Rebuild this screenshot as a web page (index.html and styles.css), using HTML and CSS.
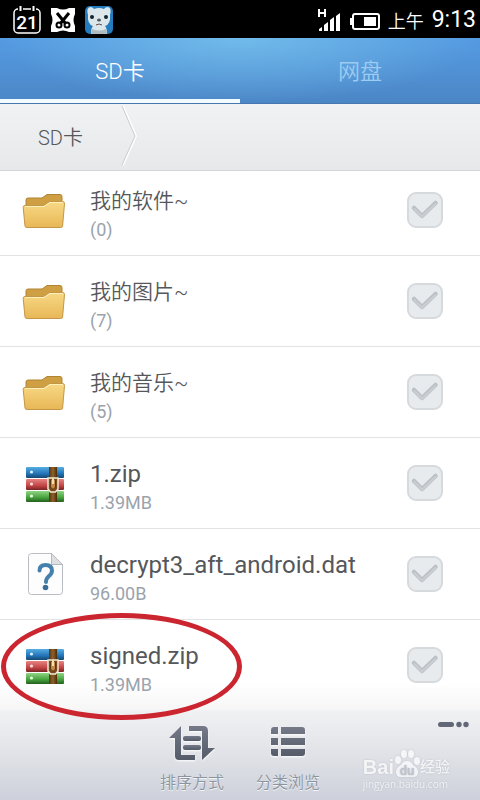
FILE: index.html
```html
<!DOCTYPE html>
<html lang="zh-CN">

<head>
    <meta charset="UTF-8">
    <meta name="viewport" content="width=device-width, initial-scale=1.0">
    <title>SD卡</title>
    <link rel="stylesheet" href="styles.css">
</head>

<body>
    <!-- shared icons -->
    <svg class="sprite" width="0" height="0" aria-hidden="true">
        <defs>
            <linearGradient id="gold" x1="0" y1="0" x2="0" y2="1">
                <stop offset="0" stop-color="#f8d986" />
                <stop offset="1" stop-color="#e8b756" />
            </linearGradient>
            <linearGradient id="blue" x1="0" y1="0" x2="0" y2="1">
                <stop offset="0" stop-color="#56aee2" />
                <stop offset="0.6" stop-color="#2374b8" />
                <stop offset="1" stop-color="#16476f" />
            </linearGradient>
            <linearGradient id="red" x1="0" y1="0" x2="0" y2="1">
                <stop offset="0" stop-color="#e58583" />
                <stop offset="0.6" stop-color="#c44545" />
                <stop offset="1" stop-color="#782525" />
            </linearGradient>
            <linearGradient id="green" x1="0" y1="0" x2="0" y2="1">
                <stop offset="0" stop-color="#90d583" />
                <stop offset="0.6" stop-color="#46a13d" />
                <stop offset="1" stop-color="#245e1e" />
            </linearGradient>
            <linearGradient id="strap" x1="0" y1="0" x2="1" y2="0">
                <stop offset="0" stop-color="#583510" />
                <stop offset="0.5" stop-color="#8d612a" />
                <stop offset="1" stop-color="#4b2b0c" />
            </linearGradient>
            <linearGradient id="slate" x1="0" y1="0" x2="0" y2="1">
                <stop offset="0" stop-color="#767a88" />
                <stop offset="1" stop-color="#555b69" />
            </linearGradient>
        </defs>
        <symbol id="folder" viewBox="0 -5 44 44">
            <path d="M4 17V7Q4 5 6 5H20L25 1.500H38Q40 1.500 40 3.500V17Z" fill="#cf9f43" stroke="#b18433" />
            <path d="M3 12.500Q1 12.500 1.200 14.500L3 33Q3.200 34.500 5 34.500H38.500Q40.500 34.500 40.600 33L42.500 10.500Q42.600 8.500 40.500 8.500H27.500L21.500 12.500Z" fill="url(#gold)" stroke="#c39745" />
            <path d="M3 13.500H22L28 9.500H41" fill="none" stroke="#fff0b9" />
        </symbol>
        <symbol id="archive" viewBox="0 -3 44 44">
            <rect x="4" y="3" width="38" height="11" rx="1" fill="url(#blue)" />
            <rect x="4" y="15" width="38" height="11" rx="1" fill="url(#red)" />
            <rect x="4" y="27" width="38" height="11" rx="1" fill="url(#green)" />
            <circle cx="9.500" cy="8" r="1.600" fill="#d8f1ff" />
            <circle cx="9.500" cy="20" r="1.600" fill="#ffe1e1" />
            <circle cx="9.500" cy="32" r="1.600" fill="#e0ffda" />
            <rect x="27" y="3" width="8" height="35" fill="url(#strap)" />
            <path d="M26 14H36V25L33.500 28H28.500L26 25Z" fill="#7a4a1d" stroke="#f5ead1" stroke-width="1.500" />
            <path d="M28.500 16V23L31 25.500L33.500 23V16" fill="#c58a48" stroke="#5a3512" />
            <rect x="30" y="14" width="2" height="6" fill="#f3dfb6" />
        </symbol>
        <symbol id="unknown" viewBox="0 0 44 44">
            <path d="M9.500 1.500H29.500L40.500 12.500V39.500Q40.500 42.500 37.500 42.500H9.500Q6.500 42.500 6.500 39.500V4.500Q6.500 1.500 9.500 1.500Z" fill="#fdfdfe" stroke="#b9bcc2" />
            <path d="M29.500 1.500V12.500H40.500Z" fill="#dddfe2" stroke="#b5b8bd" />
            <path d="M17.500 18.500Q17.500 13 23.500 13Q30 13 30 18.500Q30 21.500 27 24Q24 26.500 24 30" fill="none" stroke="#4581ad" stroke-width="4" stroke-linecap="round" />
            <circle cx="23.500" cy="35.500" r="2.800" fill="#386f99" />
        </symbol>
        <symbol id="check" viewBox="0 0 36 36">
            <path d="M7 16L15 24L28.500 11" fill="none" stroke="#bcc1c5" stroke-width="4.500" stroke-linecap="round" stroke-linejoin="round" />
            <path d="M7.500 17L15 24.500L28.500 12" fill="none" stroke="#c9ced2" stroke-width="2" stroke-linecap="round" />
        </symbol>
    </svg>

    <div class="statusbar">
        <svg class="status-icon" viewBox="0 0 28 28" aria-hidden="true">
            <rect x="1" y="3" width="26" height="24" rx="4" fill="none" stroke="#fff" stroke-width="1.500" />
            <path d="M5 3H10M18 3H23" stroke="#000" stroke-width="3" />
            <path d="M7.500 0V5M20.500 0V5" stroke="#fff" stroke-width="2" />
            <text class="calendar-day" x="14" y="23" text-anchor="middle">21</text>
        </svg>
        <svg class="status-icon" viewBox="0 0 28 28" aria-hidden="true">
            <path d="M2 2H8Q14 5 20 2H26V8Q23 14 26 20V26H20Q14 23 8 26H2V20Q5 14 2 8Z" fill="#fff" />
            <path d="M8 7L17 18M20 7L11 18" stroke="#000" stroke-width="3" />
            <circle cx="10" cy="19" r="2.500" fill="none" stroke="#000" stroke-width="2" />
            <circle cx="18" cy="19" r="2.500" fill="none" stroke="#000" stroke-width="2" />
        </svg>
        <svg class="status-icon" viewBox="0 0 28 28" aria-hidden="true">
            <rect width="28" height="28" rx="5" fill="#247bbd" />
            <path d="M6 28Q6 22 8 20Q2 18 3 9Q1 2 5 1Q8 1 9 3Q14 1 19 3Q20 1 23 1Q27 2 25 9Q26 18 20 20Q22 22 22 28Z" fill="#dce7ec" />
            <path d="M7 23Q14 26 21 23L22 28H6Z" fill="#aebbc0" />
            <circle cx="7" cy="11" r="2" fill="#17232c" />
            <circle cx="21" cy="11" r="2" fill="#17232c" />
            <ellipse cx="14" cy="14" rx="2" ry="1.500" fill="#4f5b62" />
            <path d="M11 19Q14 17 17 19" fill="none" stroke="#6a4b4b" />
        </svg>
        <span class="spacer"></span>
        <svg class="signal" viewBox="0 0 24 24" aria-hidden="true">
            <path d="M1 1V9M7 1V9M1 5H7" stroke="#fff" stroke-width="2" />
            <path d="M1 23V21L4 19V23ZM6 23V17L10 14V23ZM12 23V12L16 9V23ZM18 23V8L22 5V23Z" fill="#fff" />
        </svg>
        <svg class="battery" viewBox="0 0 30 18" aria-hidden="true">
            <rect x="3" y="1" width="26" height="15" rx="2" fill="none" stroke="#fff" stroke-width="2" />
            <rect y="5" width="3" height="7" fill="#fff" />
            <rect x="14" y="4" width="12" height="9" fill="#fff" />
        </svg>
        <span class="ampm">上午</span>
        <span class="time">9:13</span>
    </div>

    <nav class="tabs">
        <a class="tab active" href="#sd">SD卡</a>
        <a class="tab" href="#netdisk">网盘</a>
    </nav>

    <div class="breadcrumb">
        <a class="crumb" href="#sd">SD卡</a>
        <svg class="chevron" viewBox="0 0 16 62" aria-hidden="true">
            <path d="M2 1L15 31L2 60" fill="none" stroke="#fff" stroke-width="2" />
            <path d="M1 1L14 31L1 60" fill="none" stroke="#c9cbce" />
        </svg>
    </div>

    <ul class="files" id="sd">
        <li class="file">
            <svg class="file-icon"><use href="#folder" /></svg>
            <label class="info" for="f1">
                <span class="name name-cn">我的软件~</span>
                <span class="size">(0)</span>
            </label>
            <span class="check"><input type="checkbox" id="f1"><svg><use href="#check" /></svg></span>
        </li>
        <li class="file">
            <svg class="file-icon"><use href="#folder" /></svg>
            <label class="info" for="f2">
                <span class="name name-cn">我的图片~</span>
                <span class="size">(7)</span>
            </label>
            <span class="check"><input type="checkbox" id="f2"><svg><use href="#check" /></svg></span>
        </li>
        <li class="file">
            <svg class="file-icon"><use href="#folder" /></svg>
            <label class="info" for="f3">
                <span class="name name-cn">我的音乐~</span>
                <span class="size">(5)</span>
            </label>
            <span class="check"><input type="checkbox" id="f3"><svg><use href="#check" /></svg></span>
        </li>
        <li class="file">
            <svg class="file-icon"><use href="#archive" /></svg>
            <label class="info" for="f4">
                <span class="name">1.zip</span>
                <span class="size">1.39MB</span>
            </label>
            <span class="check"><input type="checkbox" id="f4"><svg><use href="#check" /></svg></span>
        </li>
        <li class="file">
            <svg class="file-icon"><use href="#unknown" /></svg>
            <label class="info" for="f5">
                <span class="name">decrypt3_aft_android.dat</span>
                <span class="size">96.00B</span>
            </label>
            <span class="check"><input type="checkbox" id="f5"><svg><use href="#check" /></svg></span>
        </li>
        <li class="file">
            <svg class="file-icon"><use href="#archive" /></svg>
            <label class="info" for="f6">
                <span class="name">signed.zip</span>
                <span class="size">1.39MB</span>
            </label>
            <span class="check"><input type="checkbox" id="f6"><svg><use href="#check" /></svg></span>
            <span class="marker"></span>
        </li>
    </ul>

    <footer class="toolbar">
        <button type="button" class="tool">
            <svg viewBox="0 0 48 36" fill="url(#slate)" aria-hidden="true">
                <path d="M1 13L13 1V30H27V35H11Q7 35 7 31V13Z" />
                <path d="M21 1H35Q40 1 40 6V23H47L34 35V6H21Z" />
                <rect x="15" y="11" width="18" height="5" rx="2" />
                <rect x="15" y="20" width="18" height="5" rx="2" />
            </svg>
            <span>排序方式</span>
        </button>
        <button type="button" class="tool">
            <svg viewBox="0 0 48 36" fill="url(#slate)" aria-hidden="true">
                <path d="M10 2H14V9H7V5Q7 2 10 2ZM7 13H14V20H7ZM7 24H14V31H10Q7 31 7 28Z" />
                <path d="M17 2H38Q41 2 41 5V9H17ZM17 13H41V20H17ZM17 24H41V28Q41 31 38 31H17Z" />
            </svg>
            <span>分类浏览</span>
        </button>
        <button type="button" class="more" aria-label="更多">
            <svg viewBox="0 0 32 8" fill="#626777" aria-hidden="true">
                <rect x="1" y="1" width="16" height="5" rx="2.500" />
                <circle cx="22" cy="3.500" r="2.700" />
                <circle cx="29" cy="3.500" r="2.700" />
            </svg>
        </button>
        <div class="watermark">
            <div class="brand">
                <span class="bai">Bai</span>
                <svg viewBox="0 0 26 28" aria-hidden="true">
                    <g fill="#fff">
                        <ellipse cx="4" cy="11" rx="3" ry="4" />
                        <ellipse cx="10" cy="5" rx="3" ry="4" />
                        <ellipse cx="17" cy="5" rx="3" ry="4" />
                        <ellipse cx="23" cy="12" rx="3" ry="4" />
                        <path d="M13 12Q17 12 19 16Q24 19 24 23Q24 28 19 28H7Q2 28 2 23Q2 19 7 16Q9 12 13 12Z" />
                    </g>
                    <text class="du" x="13" y="26" text-anchor="middle">du</text>
                </svg>
                <span class="exp">经验</span>
            </div>
            <div class="site">jingyan.baidu.com</div>
        </div>
    </footer>
</body>

</html>
```

FILE: styles.css
```css
* {
    box-sizing: border-box;
}

body {
    margin: 0;
    min-height: 100vh;
    display: flex;
    flex-direction: column;
    font-family: Roboto, "Noto Sans CJK SC", sans-serif;
    background-color: #fff;
    color: #55575a;
}

a {
    color: inherit;
    text-decoration: none;
}

button {
    font-family: inherit;
    background: none;
    border: none;
    padding: 0;
    cursor: pointer;
}

.sprite {
    position: absolute;
}

/* status bar */
.statusbar {
    display: flex;
    align-items: center;
    gap: 8px;
    height: 38px;
    padding: 2px 4px 0 13px;
    background-color: #000;
    color: #fff;
}

.status-icon {
    width: 28px;
    height: 28px;
}

.calendar-day {
    font-size: 19px;
    font-weight: 500;
    fill: #fff;
}

.spacer {
    flex: 1;
}

.signal {
    width: 24px;
    height: 24px;
}

.battery {
    width: 30px;
    height: 18px;
    margin-top: 4px;
}

.ampm {
    font-size: 18px;
    font-weight: 350;
}

.time {
    font-size: 23px;
    line-height: 36px;
}

/* tabs */
.tabs {
    display: flex;
    height: 66px;
    background: radial-gradient(ellipse 50% 100% at 50% 0, rgba(125, 200, 238, 0.7), rgba(100, 170, 230, 0)),
        linear-gradient(#559be2, #4b86c6);
    border-bottom: 1px solid #4877b0;
}

.tab {
    flex: 1;
    padding-top: 4px;
    text-align: center;
    font-size: 22px;
    font-weight: 350;
    line-height: 60px;
    color: #9dcbf2;
    border-bottom: 4px solid transparent;
}

.tab.active {
    color: #fff;
    border-bottom-color: #f2fbff;
}

/* breadcrumb */
.breadcrumb {
    display: flex;
    align-items: center;
    position: relative;
    z-index: 1;
    height: 67px;
    padding: 0 0 2px 38px;
    background: linear-gradient(#f0f2f3, #e6e8ea);
    border-bottom: 1px solid #d3d5d7;
}

.crumb {
    width: 83px;
    font-size: 20px;
    font-weight: 350;
}

.chevron {
    width: 16px;
    height: 62px;
}

/* file list */
.files {
    flex: 1;
    margin: 0;
    padding: 0;
    list-style: none;
    margin-top: -6px; /* first row slides under the breadcrumb */
}

.file {
    display: flex;
    align-items: center;
    position: relative;
    height: 91px;
    padding: 0 37px 0 22px;
    border-bottom: 1px solid #e2e3e5;
}

.file:last-child {
    border-bottom-color: #f1f2f3;
    background: linear-gradient(#fff 70%, #f6f6f7);
}

.file-icon {
    width: 44px;
    height: 44px;
    margin-right: 24px;
}

.info {
    flex: 1;
    display: flex;
    flex-direction: column;
    padding-top: 8px;
}

.name {
    font-size: 24px;
    line-height: 32px;
}

.name-cn {
    font-size: 21px;
    font-weight: 350;
}

.size {
    font-size: 18px;
    line-height: 26px;
    color: #9aa3ad;
}

.check {
    display: grid;
    width: 36px;
    height: 36px;
}

.check input {
    appearance: none;
    grid-area: 1 / 1;
    margin: 0;
    border: 2px solid #d6dadd;
    border-radius: 9px;
    background-color: #e7ebee;
}

.check svg {
    grid-area: 1 / 1;
    width: 36px;
    height: 36px;
    pointer-events: none;
}

/* hand-drawn ring around a file */
.marker {
    position: absolute;
    left: 1px;
    top: -7px;
    width: 241px;
    height: 107px;
    border: 5px solid #cb2530;
    border-radius: 50%;
    pointer-events: none;
    z-index: 2;
}

/* toolbar */
.toolbar {
    display: flex;
    justify-content: center;
    position: relative;
    height: 90px;
    padding-top: 14px;
    background: linear-gradient(#f0f1f3, #e3e5e9 40%, #cdd0da);
}

.tool {
    display: flex;
    flex-direction: column;
    align-items: center;
    gap: 10px;
    width: 96px;
    font-size: 16px;
    font-weight: 350;
    line-height: 24px;
    color: #8c949f;
    text-shadow: 0 1px 0 #f2f4f6;
}

.tool svg {
    width: 48px;
    height: 36px;
    filter: drop-shadow(0 1px 1px #fff);
}

.more {
    position: absolute;
    top: 10px;
    right: 11px;
    width: 32px;
    height: 8px;
}

.more svg {
    display: block;
    width: 32px;
    height: 8px;
}

.watermark {
    position: absolute;
    right: 30px;
    bottom: 10px;
    color: #fff;
    opacity: 0.7;
    text-shadow: 0 0 2px #a9adb8;
}

.brand {
    display: flex;
    align-items: flex-end;
    height: 28px;
}

.brand svg {
    width: 26px;
    height: 28px;
    filter: drop-shadow(0 0 1px #b4b8c2);
}

.bai {
    font-family: "Liberation Sans", sans-serif;
    font-size: 20px;
    font-weight: 700;
    line-height: 20px;
}

.du {
    font-size: 13px;
    font-weight: 700;
    fill: #b5b9c5;
}

.exp {
    font-size: 15px;
    font-weight: 500;
    line-height: 20px;
}

.site {
    font-family: "Open Sans", sans-serif;
    font-size: 10px;
    line-height: 14px;
}
```
